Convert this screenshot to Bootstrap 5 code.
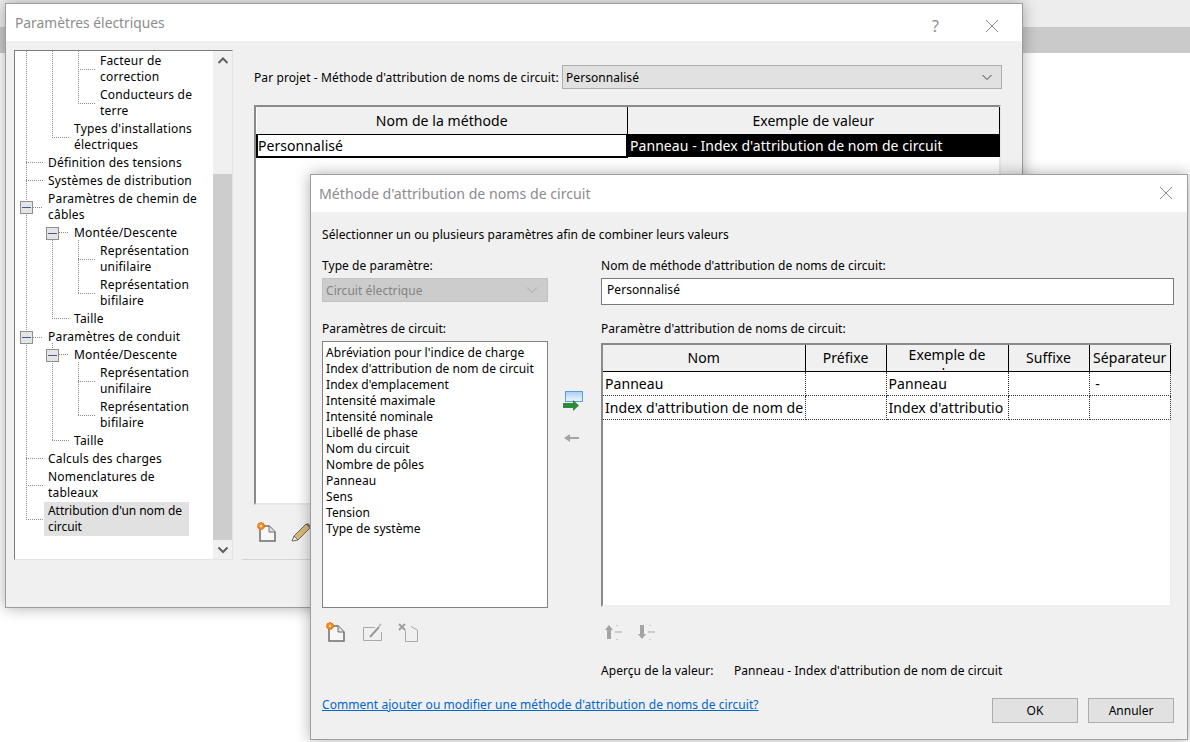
<!DOCTYPE html>
<html lang="fr">
<head>
<meta charset="utf-8">
<title>Paramètres électriques</title>
<link rel="stylesheet" href="https://cdn.jsdelivr.net/npm/bootstrap@5.3.0/dist/css/bootstrap.min.css">
<style>
html,body{height:100%;overflow:hidden}
body{background:#fff;color:#000;font-family:"Noto Sans","Liberation Sans",sans-serif;font-size:12px;line-height:16px;letter-spacing:.06px}
.bar-a{height:27px;background:#ededed}
.bar-b{height:26px;background:#cacaca}
.winbox{position:absolute;background:#f0f0f0;border:1px solid #9d9d9d;box-shadow:0 0 14px rgba(0,0,0,.32)}
.win-main{left:5px;top:3px;width:1018px;height:605px}
.win-sub{left:310px;top:174px;width:878px;height:566px}
.wintitle{background:#fff;color:#8c8c8c;line-height:20px;height:37px;padding-top:9px;letter-spacing:0}
.win-main .wintitle{font-size:13.8px;padding-left:9px;padding-right:22px}
.win-sub .wintitle{font-size:14.15px;padding-left:8px;padding-right:13px}
.sysq{color:#8f8f8f;font-size:16px;margin-right:45px;margin-bottom:2px}
.sysx{margin-bottom:2px}
.sysx-sub{margin-top:1px}
.mainbody{padding:9px 0 0 8px}
.treebox{width:219px;height:510px;flex-shrink:0;background:#fff;border:1px solid #e4e4e4;border-top-color:#7d7d7d;border-left-color:#7d7d7d;position:relative;overflow:hidden}
.treelines{position:absolute;left:0;top:0;pointer-events:none}
.treelist{width:198px;padding-top:1px;letter-spacing:.2px}
.tnode{white-space:nowrap;padding:1px 0 1px 4px;display:block}
.lv0{margin-left:29px}
.lv1{margin-left:55px}
.lv2{margin-left:81px}
.tsel{background:#e1e1e1;width:145px;letter-spacing:-.05px}
.vscroll{width:19px;background:#f0f0f0}
.scroll-btn{height:19px}
.scroll-up{height:123px}
.scroll-thumb{height:366px;background:#cdcdcd}
.rightpanel{padding:15px 0 0 21px}
.lab-main{width:308px;white-space:nowrap;letter-spacing:.1px;padding-top:2px}
.fieldlab{padding-top:1px;margin-bottom:-1px}
.combo{background:#e1e1e1;border:1px solid #adadad;height:24px;padding:0 5px 0 3px}
.combo span{padding-top:2px}
.combo-main{width:440px}
.combo-off{background:#ccc;border-color:#c2c2c2;color:#838383;width:226px}
.gridframe{background:#fff;border:2px solid #8a8a8a;border-right:2px solid #e6e6e6;border-bottom:2px solid #e6e6e6}
.frame-main{width:747px;height:400px;margin-top:16px}
.frame-sub{width:571px;height:264px;margin-top:7px;border-right-color:#eee;border-bottom-color:#eee}
.gtable{table-layout:fixed;font-size:14px;line-height:19px}
.gtable th{font-weight:400;background:#f0f0f0;text-align:center;border-right:1px solid #000;border-bottom:1px solid #000;overflow:hidden}
.frame-main .gtable{width:744px}
.frame-main th{height:27px}
.frame-sub .gtable{width:568px}
.frame-sub th{height:26px;padding:0}
.wrapclip{display:block;height:25px;overflow:hidden;line-height:19px}
.cell-a{height:23px;border:2px solid #000;border-top-width:1px;padding:0;white-space:nowrap}
.cell-b{background:#000;color:#fff;padding:0 0 0 2px;white-space:nowrap}
.frame-sub td{height:24px;border-right:1px dotted #333;border-bottom:1px dotted #333;padding:0 0 0 2px;white-space:nowrap;overflow:hidden}
.col-n{width:202px}.col-p{width:81px}.col-e{width:122px}.col-s{width:81px}
.col-m{width:370px}
.toolrow{height:55px;margin-left:-12px;padding-left:14px;border-bottom:1px solid #d4d4d4;width:767px;gap:12px}
.subbody{padding:15px 13px 0 11px}
.gapcol{width:53px;padding:133px 0 0 15px;gap:20px}
.leftcol{width:226px}
.rightcol{width:573px}
.mt5{margin-top:5px}
.mt14{margin-top:14px}
.mt15{margin-top:15px}
.mt18{margin-top:18px}
.listbox{height:267px;background:#fff;border:1px solid #828282;padding:3px}
.listbox div{height:16px;white-space:nowrap}
.field{height:27px;background:#fff;border:1px solid #7a7a7a;padding:3px 5px}
.icons{height:24px}
.icons-l{margin-top:12px;gap:14px;padding-left:3px}
.icons-r{margin-top:13px;gap:13px;padding-left:3px}
.prevrow{margin-top:19px}
.prevlab{width:133px}
.helplink{color:#0066cc;text-decoration:underline}
.btnrow{gap:10px}
.winbtn{background:#e1e1e1;border:1px solid #adadad;border-radius:0;width:86px;height:25px;padding:0;font-size:12px;line-height:16px;color:#000;margin-top:1px}
.winbtn:hover{background:#e1e1e1;border-color:#adadad;color:#000}
</style>
</head>
<body>
<div class="bar-a"></div>
<div class="bar-b"></div>

<section class="winbox win-main">
  <div class="wintitle d-flex justify-content-between">
    <span>Paramètres électriques</span>
    <span class="d-flex align-items-center">
      <span class="sysq">?</span>
      <svg class="sysx" width="16" height="16" viewBox="0 0 16 16"><path d="M2 2 14 14M14 2 2 14" stroke="#8a8a8a" fill="none"/></svg>
    </span>
  </div>
  <div class="mainbody d-flex">
    <div class="treebox d-flex">
      <div class="treelist">
        <span class="tnode lv2">Facteur de<br>correction</span>
        <span class="tnode lv2">Conducteurs de<br>terre</span>
        <span class="tnode lv1">Types d'installations<br>électriques</span>
        <span class="tnode lv0">Définition des tensions</span>
        <span class="tnode lv0">Systèmes de distribution</span>
        <span class="tnode lv0">Paramètres de chemin de<br>câbles</span>
        <span class="tnode lv1">Montée/Descente</span>
        <span class="tnode lv2">Représentation<br>unifilaire</span>
        <span class="tnode lv2">Représentation<br>bifilaire</span>
        <span class="tnode lv1">Taille</span>
        <span class="tnode lv0">Paramètres de conduit</span>
        <span class="tnode lv1">Montée/Descente</span>
        <span class="tnode lv2">Représentation<br>unifilaire</span>
        <span class="tnode lv2">Représentation<br>bifilaire</span>
        <span class="tnode lv1">Taille</span>
        <span class="tnode lv0">Calculs des charges</span>
        <span class="tnode lv0">Nomenclatures de<br>tableaux</span>
        <span class="tnode lv0 tsel">Attribution d'un nom de<br>circuit</span>
      </div>
      <div class="vscroll d-flex flex-column">
        <div class="scroll-up d-flex justify-content-center pt-1">
          <svg width="12" height="12" viewBox="0 0 12 12"><path d="M1.500 8 6 3.500 10.500 8" stroke="#606060" stroke-width="2" fill="none"/></svg>
        </div>
        <div class="scroll-thumb"></div>
        <div class="scroll-btn d-flex justify-content-center pt-1">
          <svg width="12" height="12" viewBox="0 0 12 12"><path d="M1.500 3.500 6 8 10.500 3.500" stroke="#606060" stroke-width="2" fill="none"/></svg>
        </div>
      </div>
      <svg class="treelines" width="198" height="508" viewBox="15 51 198 508">
        <g stroke="#8c8c8c" stroke-dasharray="1 1" fill="none">
          <path d="M26.500 51V519.500M52.500 51V137.500M52.500 240V318.500M52.500 343V440.500M78.500 51V103.500M78.500 240V293.500M78.500 362V415.500"/>
          <path d="M26 162.500H43M26 180.500H43M33 207.500H43M33 337.500H43M26 458.500H43M26 485.500H43M26 519.500H43"/>
          <path d="M52 137.500H69M59 232.500H69M52 318.500H69M59 354.500H69M52 440.500H69"/>
          <path d="M78 69.500H95M78 103.500H95M78 259.500H95M78 293.500H95M78 381.500H95M78 415.500H95"/>
        </g>
        <g fill="#e4e4e4" stroke="#8f8f8f">
          <rect x="20.500" y="201.500" width="12" height="12"/><rect x="46.500" y="227.500" width="12" height="12"/>
          <rect x="20.500" y="331.500" width="12" height="12"/><rect x="46.500" y="349.500" width="12" height="12"/>
        </g>
        <g stroke="#3d5a9c">
          <path d="M22 207.500H31M48 233.500H57M22 337.500H31M48 355.500H57"/>
        </g>
      </svg>
    </div>
    <div class="rightpanel flex-grow-1">
      <div class="d-flex align-items-center">
        <span class="lab-main">Par projet - Méthode d'attribution de noms de circuit:</span>
        <div class="combo combo-main d-flex justify-content-between align-items-center">
          <span>Personnalisé</span>
          <svg width="10" height="7" viewBox="0 0 10 7" class="me-1"><path d="M.5 1 5 5.500 9.500 1" stroke="#404040" fill="none"/></svg>
        </div>
      </div>
      <div class="gridframe frame-main">
        <table class="gtable">
          <colgroup><col class="col-m"><col></colgroup>
          <thead><tr><th>Nom de la méthode</th><th>Exemple de valeur</th></tr></thead>
          <tbody><tr><td class="cell-a">Personnalisé</td><td class="cell-b">Panneau - Index d'attribution de nom de circuit</td></tr></tbody>
        </table>
      </div>
      <div class="toolrow d-flex align-items-center">
        <svg width="22" height="22" viewBox="0 0 22 22"><path d="M4 5h9l6 6v9H4z" fill="#f7f7f7" stroke="#6e6e6e" stroke-width="1.500"/><path d="M13 5v6h6" fill="#e2e2e2" stroke="#6e6e6e"/><circle cx="5" cy="5" r="3.500" fill="#f08a1d" stroke="#e8641b" stroke-dasharray="2 1"/><circle cx="5" cy="5" r="1.300" fill="#ffe6a0"/></svg>
        <svg width="22" height="22" viewBox="0 0 22 22"><path d="M4 15 16 3l4 4L8 19z" fill="#d8b878" stroke="#6f6a60"/><path d="M4 15l-2 5 6-1z" fill="#f4f0e6" stroke="#6f6a60"/><path d="M16 3l4 4 1-2-3-3z" fill="#777"/></svg>
      </div>
    </div>
  </div>
</section>

<section class="winbox win-sub">
  <div class="wintitle d-flex justify-content-between">
    <span>Méthode d'attribution de noms de circuit</span>
    <svg class="sysx-sub" width="16" height="16" viewBox="0 0 16 16"><path d="M2 2 14 14M14 2 2 14" stroke="#8a8a8a" fill="none"/></svg>
  </div>
  <div class="subbody">
    <div>Sélectionner un ou plusieurs paramètres afin de combiner leurs valeurs</div>
    <div class="d-flex mt14">

      <div class="leftcol">
        <div class="fieldlab">Type de paramètre:</div>
        <div class="combo combo-off mt5 d-flex justify-content-between align-items-center">
          <span>Circuit électrique</span>
          <svg width="12" height="8" viewBox="0 0 12 8" class="me-1"><path d="M1 1.500 6 6.500 11 1.500" stroke="#a8a8a8" fill="none"/></svg>
        </div>
        <div class="fieldlab mt18">Paramètres de circuit:</div>
        <div class="listbox mt5">
          <div>Abréviation pour l'indice de charge</div>
          <div>Index d'attribution de nom de circuit</div>
          <div>Index d'emplacement</div>
          <div>Intensité maximale</div>
          <div>Intensité nominale</div>
          <div>Libellé de phase</div>
          <div>Nom du circuit</div>
          <div>Nombre de pôles</div>
          <div>Panneau</div>
          <div>Sens</div>
          <div>Tension</div>
          <div>Type de système</div>
        </div>
        <div class="icons icons-l d-flex align-items-center">
          <svg width="22" height="22" viewBox="0 0 22 22"><path d="M4 5h9l6 6v9H4z" fill="#f7f7f7" stroke="#6e6e6e" stroke-width="1.500"/><path d="M13 5v6h6" fill="#e2e2e2" stroke="#6e6e6e"/><circle cx="5" cy="5" r="3.500" fill="#f08a1d" stroke="#e8641b" stroke-dasharray="2 1"/><circle cx="5" cy="5" r="1.300" fill="#ffe6a0"/></svg>
          <svg width="22" height="22" viewBox="0 0 22 22"><path d="M2.500 6.500V19.500H20.500V11M2.500 6.500H14" stroke="#a9a9a9" fill="none"/><path d="M9 16 18 6" stroke="#9a9a9a" stroke-width="2"/><path d="M18 5l2-2" stroke="#bbb" stroke-width="2"/></svg>
          <svg width="22" height="22" viewBox="0 0 22 22"><path d="M8.500 9.500V20.500H20.500V9M14 5.500 20.500 9" stroke="#a9a9a9" fill="none"/><path d="M2 3l6 6M8 3 2 9" stroke="#a0a0a0" stroke-width="2"/></svg>
        </div>
      </div>

      <div class="gapcol d-flex flex-column">
        <svg width="20" height="22" viewBox="0 0 20 22"><defs><linearGradient id="addg" x1="0" y1="0" x2="0" y2="1"><stop offset="0" stop-color="#a8cdf2"/><stop offset="1" stop-color="#f2f7fc"/></linearGradient></defs><rect x="2.500" y="1.500" width="17" height="10" fill="url(#addg)" stroke="#5a9bdc"/><path d="M0 13h10v-3l6 5.500-6 5.500v-3H0z" fill="#2d8a3c"/></svg>
        <svg width="18" height="12" viewBox="0 0 18 12"><path d="M16 5H7V2L1 6l6 4V7h9z" fill="#a4a4a4"/></svg>
      </div>

      <div class="rightcol">
        <div class="fieldlab">Nom de méthode d'attribution de noms de circuit:</div>
        <div class="field mt5">Personnalisé</div>
        <div class="fieldlab mt15">Paramètre d'attribution de noms de circuit:</div>
        <div class="gridframe frame-sub">
          <table class="gtable">
            <colgroup><col class="col-n"><col class="col-p"><col class="col-e"><col class="col-s"><col></colgroup>
            <thead><tr><th>Nom</th><th>Préfixe</th><th><span class="wrapclip">Exemple de<br>valeur</span></th><th>Suffixe</th><th>Séparateur</th></tr></thead>
            <tbody>
              <tr><td>Panneau</td><td></td><td>Panneau</td><td></td><td>&nbsp;-</td></tr>
              <tr><td>Index d'attribution de nom de</td><td></td><td>Index d'attributio</td><td></td><td></td></tr>
            </tbody>
          </table>
        </div>
        <div class="icons icons-r d-flex align-items-center">
          <svg width="20" height="20" viewBox="0 0 20 20"><path d="M5 3 9 8H7v9H3V8H1z" fill="#a4a4a4"/><path d="M11 10h7" stroke="#a9a9a9"/><path d="M12.500 3.500h1M12.500 17.500h1" stroke="#a9a9a9"/></svg>
          <svg width="20" height="20" viewBox="0 0 20 20"><path d="M5 17 9 12H7V3H3v9H1z" fill="#a4a4a4"/><path d="M11 10h7" stroke="#a9a9a9"/><path d="M12.500 3.500h1M12.500 17.500h1" stroke="#a9a9a9"/></svg>
        </div>
        <div class="prevrow d-flex"><span class="prevlab">Aperçu de la valeur:</span><span>Panneau - Index d'attribution de nom de circuit</span></div>
      </div>
    </div>
    <div class="d-flex justify-content-between mt18">
      <a href="#" class="helplink">Comment ajouter ou modifier une méthode d'attribution de noms de circuit?</a>
      <div class="d-flex btnrow">
        <button type="button" class="btn winbtn">OK</button>
        <button type="button" class="btn winbtn">Annuler</button>
      </div>
    </div>
  </div>
</section>
<script src="https://cdn.jsdelivr.net/npm/bootstrap@5.3.0/dist/js/bootstrap.bundle.min.js"></script>
</body>
</html>
